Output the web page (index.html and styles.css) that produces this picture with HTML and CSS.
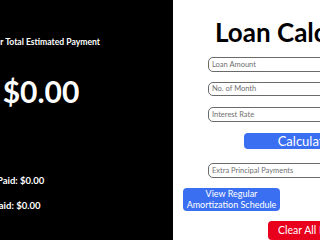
FILE: index.html
```html
<!DOCTYPE html>
<html>
<head>
<meta charset="utf-8">
<link rel="stylesheet" href="styles.css">
</head>
<body>
<div class="page">
  <div class="results">
    <div class="results-inner">
      <div class="est-label">Your Total Estimated Payment</div>
      <div class="est-value">$0.00</div>
      <div class="paid">Total Principal Paid: $0.00</div>
      <div class="paid second">Total Interest Paid: $0.00</div>
    </div>
  </div>
  <div class="form">
    <h1 class="title">Loan Calculator</h1>
    <input class="field" type="text" placeholder="Loan Amount">
    <input class="field f2" type="text" placeholder="No. of Month">
    <input class="field f3" type="text" placeholder="Interest Rate">
    <button class="btn calc">Calculate</button>
    <input class="field extra" type="text" placeholder="Extra Principal Payments">
    <button class="btn view">View Regular Amortization Schedule</button>
    <button class="btn clear">Clear All Fields</button>
  </div>
</div>
</body>
</html>
```
FILE: styles.css
```css
html, body {
  margin: 0;
  padding: 0;
  width: 320px;
  height: 240px;
  overflow: hidden;
  background: #fff;
  font-family: Lato, "Open Sans", sans-serif;
}
.page {
  display: flex;
  width: 320px;
  height: 240px;
  overflow: hidden;
}
.results {
  flex: none;
  width: 173px;
  height: 240px;
  background: #000;
  color: #fff;
  overflow: hidden;
}
.results-inner {
  width: 200px;
  margin-left: -59px;
  padding-top: 36px;
}
.est-label {
  text-align: center;
  font-size: 8.6px;
  font-weight: 700;
  line-height: 12px;
  padding-left: 4px;
}
.est-value {
  text-align: center;
  font-size: 30px;
  font-weight: 700;
  line-height: 34px;
  margin-top: 26px;
}
.paid {
  font-size: 9.5px;
  font-weight: 700;
  line-height: 12px;
  margin-top: 67px;
  margin-left: -6px;
}
.paid.second {
  margin-top: 13px;
  margin-left: -6px;
}
.form {
  flex: none;
  width: 300px;
  display: flex;
  flex-direction: column;
  align-items: flex-start;
}
.title {
  margin: 15px 0 0 42px;
  font-size: 26px;
  font-weight: 700;
  line-height: 34px;
  color: #000;
  white-space: nowrap;
}
.field {
  box-sizing: border-box;
  width: 200px;
  height: 16px;
  margin: 8px 0 0 35px;
  border: 1.5px solid #6a6a6a;
  border-radius: 5px;
  padding: 0 3px;
  font-family: Lato, "Open Sans", sans-serif;
  font-size: 7.5px;
  color: #333;
  background: #fff;
}
.field.f2 {
  margin-top: 10px;
}
.field.f3 {
  margin-top: 11px;
}
.field::placeholder {
  color: #707070;
}
.btn {
  border: none;
  color: #fff;
  font-family: Lato, "Open Sans", sans-serif;
  border-radius: 4px;
  padding: 0;
  white-space: nowrap;
}
.calc {
  margin: 11px 0 0 71px;
  width: 120px;
  height: 16px;
  background: #3b6ff2;
  font-size: 13px;
  line-height: 16px;
}
.field.extra {
  margin-top: 14px;
}
.view {
  margin: 10px 0 0 10px;
  width: 97px;
  height: 26px;
  background: #3b6ff2;
  font-size: 9px;
  line-height: 11px;
  white-space: normal;
}
.clear {
  margin: 10px 0 0 95px;
  width: 90px;
  height: 20px;
  background: #e8001c;
  font-size: 10.5px;
  line-height: 19px;
  text-align: left;
  padding-left: 10px;
}
```
